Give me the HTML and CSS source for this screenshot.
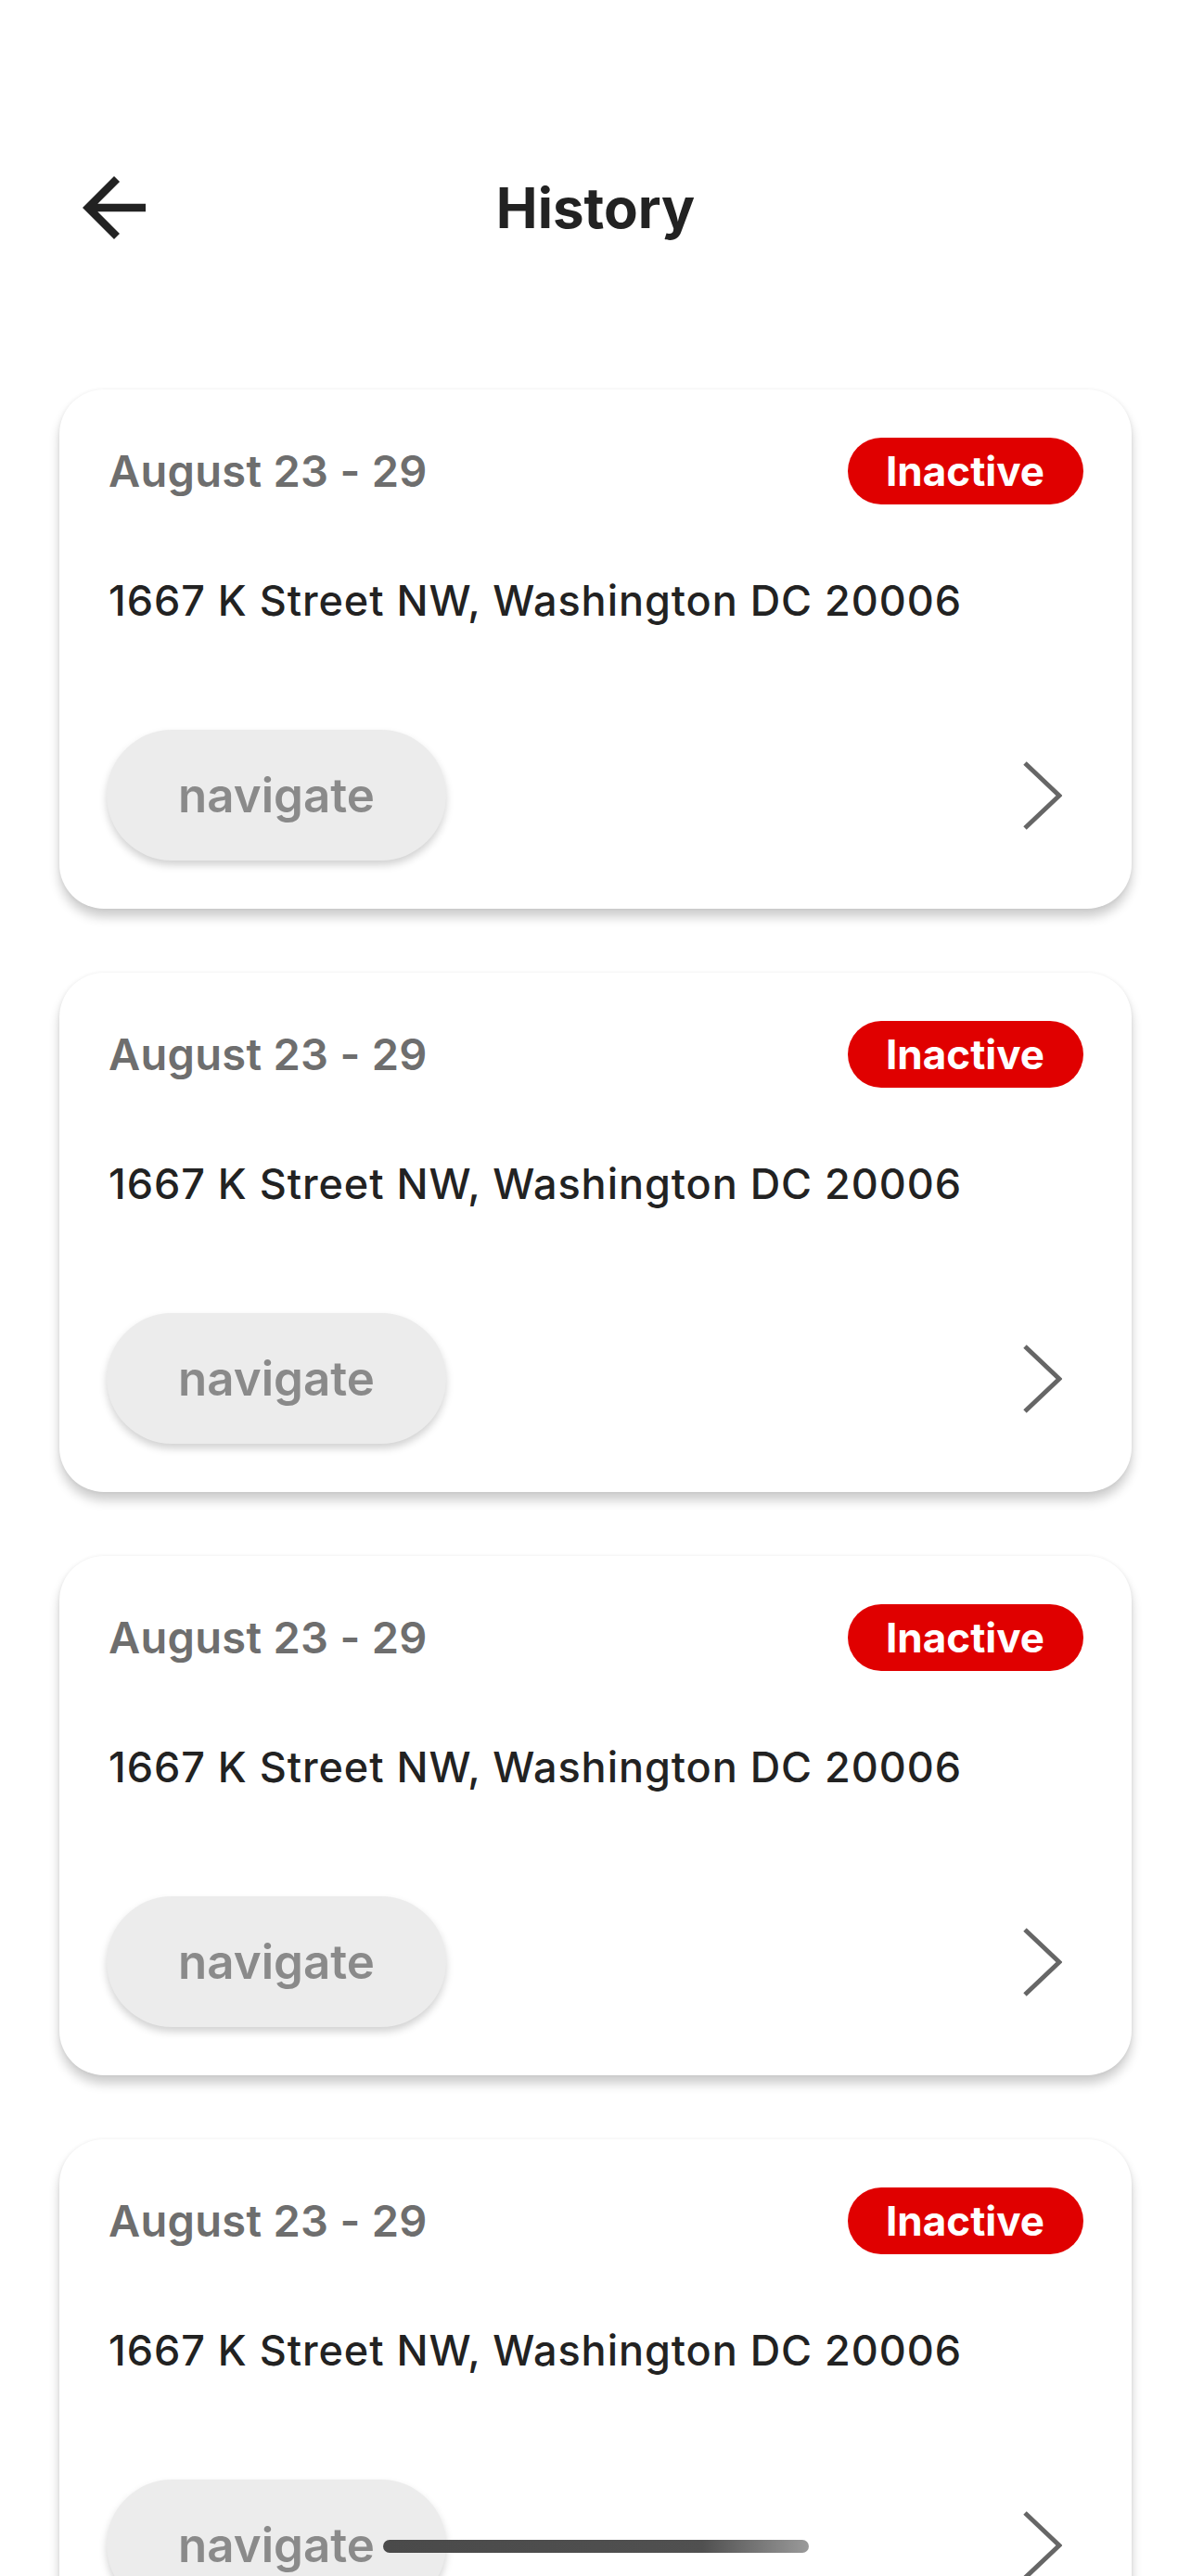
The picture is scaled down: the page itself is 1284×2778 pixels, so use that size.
FILE: index.html
```html
<!DOCTYPE html>
<html lang="en">
<head>
<meta charset="utf-8">
<title>History</title>
<link rel="stylesheet" href="styles.css">
</head>
<body>
<div class="screen">
  <header class="topbar">
    <div class="back">
      <svg class="back-icon" viewBox="0 0 24 24" width="102" height="102"><path d="M20 11H7.83l5.59-5.59L12 4l-8 8 8 8 1.41-1.41L7.83 13H20v-2z" fill="#222"/></svg>
    </div>
    <h1 class="title">History</h1>
    <div class="spacer"></div>
  </header>

  <main class="list">
    <section class="card">
      <div class="card-top">
        <span class="date">August 23 - 29</span>
        <span class="badge">Inactive</span>
      </div>
      <p class="address">1667 K Street NW, Washington DC 20006</p>
      <div class="card-bottom">
        <button class="nav-btn">navigate</button>
        <svg class="chevron" viewBox="0 0 44 76" width="44" height="76"><polyline points="4,3 41,38 4,73" fill="none" stroke="#666" stroke-width="5" stroke-linejoin="miter"/></svg>
      </div>
    </section>

    <section class="card">
      <div class="card-top">
        <span class="date">August 23 - 29</span>
        <span class="badge">Inactive</span>
      </div>
      <p class="address">1667 K Street NW, Washington DC 20006</p>
      <div class="card-bottom">
        <button class="nav-btn">navigate</button>
        <svg class="chevron" viewBox="0 0 44 76" width="44" height="76"><polyline points="4,3 41,38 4,73" fill="none" stroke="#666" stroke-width="5" stroke-linejoin="miter"/></svg>
      </div>
    </section>

    <section class="card">
      <div class="card-top">
        <span class="date">August 23 - 29</span>
        <span class="badge">Inactive</span>
      </div>
      <p class="address">1667 K Street NW, Washington DC 20006</p>
      <div class="card-bottom">
        <button class="nav-btn">navigate</button>
        <svg class="chevron" viewBox="0 0 44 76" width="44" height="76"><polyline points="4,3 41,38 4,73" fill="none" stroke="#666" stroke-width="5" stroke-linejoin="miter"/></svg>
      </div>
    </section>

    <section class="card">
      <div class="card-top">
        <span class="date">August 23 - 29</span>
        <span class="badge">Inactive</span>
      </div>
      <p class="address">1667 K Street NW, Washington DC 20006</p>
      <div class="card-bottom">
        <button class="nav-btn">navigate</button>
        <svg class="chevron" viewBox="0 0 44 76" width="44" height="76"><polyline points="4,3 41,38 4,73" fill="none" stroke="#666" stroke-width="5" stroke-linejoin="miter"/></svg>
      </div>
    </section>
  </main>

  <div class="home-indicator"></div>
</div>
</body>
</html>
```

FILE: styles.css
```css
* {
  box-sizing: border-box;
}

html, body {
  margin: 0;
  padding: 0;
  background: #ffffff;
}

body {
  font-family: Inter, "Noto Sans", "Liberation Sans", sans-serif;
  color: #222222;
  overflow: hidden;
}

.screen {
  width: 1284px;
  height: 2778px;
  overflow: hidden;
  position: relative;
  background: #ffffff;
}

.topbar {
  display: grid;
  grid-template-columns: 1fr auto 1fr;
  align-items: center;
  height: 102px;
  margin-top: 173px;
  padding: 0 72px;
}

.back {
  display: flex;
  align-items: center;
  height: 102px;
}

.back-icon {
  display: block;
}

.title {
  margin: 0;
  font-size: 60px;
  line-height: 100px;
  font-weight: 700;
  color: #222222;
  letter-spacing: 0;
}

.list {
  padding: 145px 64px 0 64px;
  display: flex;
  flex-direction: column;
  gap: 69px;
}

.card {
  flex: none;
  height: 560px;
  background: #ffffff;
  border-radius: 48px;
  padding: 52px 52px 52px 51px;
  display: flex;
  flex-direction: column;
  box-shadow: 0 9px 12px rgba(0, 0, 0, 0.2), 0 0 4px rgba(0, 0, 0, 0.06);
}

.card-top {
  display: flex;
  justify-content: space-between;
  align-items: center;
  height: 72px;
}

.date {
  font-size: 47px;
  font-weight: 600;
  color: #6e6e6e;
  line-height: 72px;
  letter-spacing: 0.3px;
  padding-left: 2px;
}

.badge {
  background: #e00000;
  color: #ffffff;
  font-size: 44px;
  font-weight: 700;
  line-height: 72px;
  height: 72px;
  padding: 0 42px 0 41px;
  border-radius: 36px;
}

.address {
  margin: 77px 0 0 0;
  padding-left: 2px;
  font-size: 45px;
  font-weight: 500;
  line-height: 54px;
  color: #222222;
  letter-spacing: 0.95px;
}

.card-bottom {
  margin-top: 112px;
  display: flex;
  justify-content: space-between;
  align-items: center;
}

.nav-btn {
  width: 366px;
  height: 141px;
  border: none;
  border-radius: 71px;
  background: #ececec;
  color: #8a8a8a;
  font-family: Inter, "Noto Sans", "Liberation Sans", sans-serif;
  font-size: 51px;
  font-weight: 600;
  padding: 0;
  box-shadow: 0 5px 8px rgba(0, 0, 0, 0.18);
}

.chevron {
  display: block;
  margin-right: 23px;
}

.home-indicator {
  position: absolute;
  left: 413px;
  bottom: 25px;
  width: 459px;
  height: 14px;
  border-radius: 7px;
  background: linear-gradient(to right, #4a4a4a 0%, #505050 75%, #9a9a9a 100%);
}
```
